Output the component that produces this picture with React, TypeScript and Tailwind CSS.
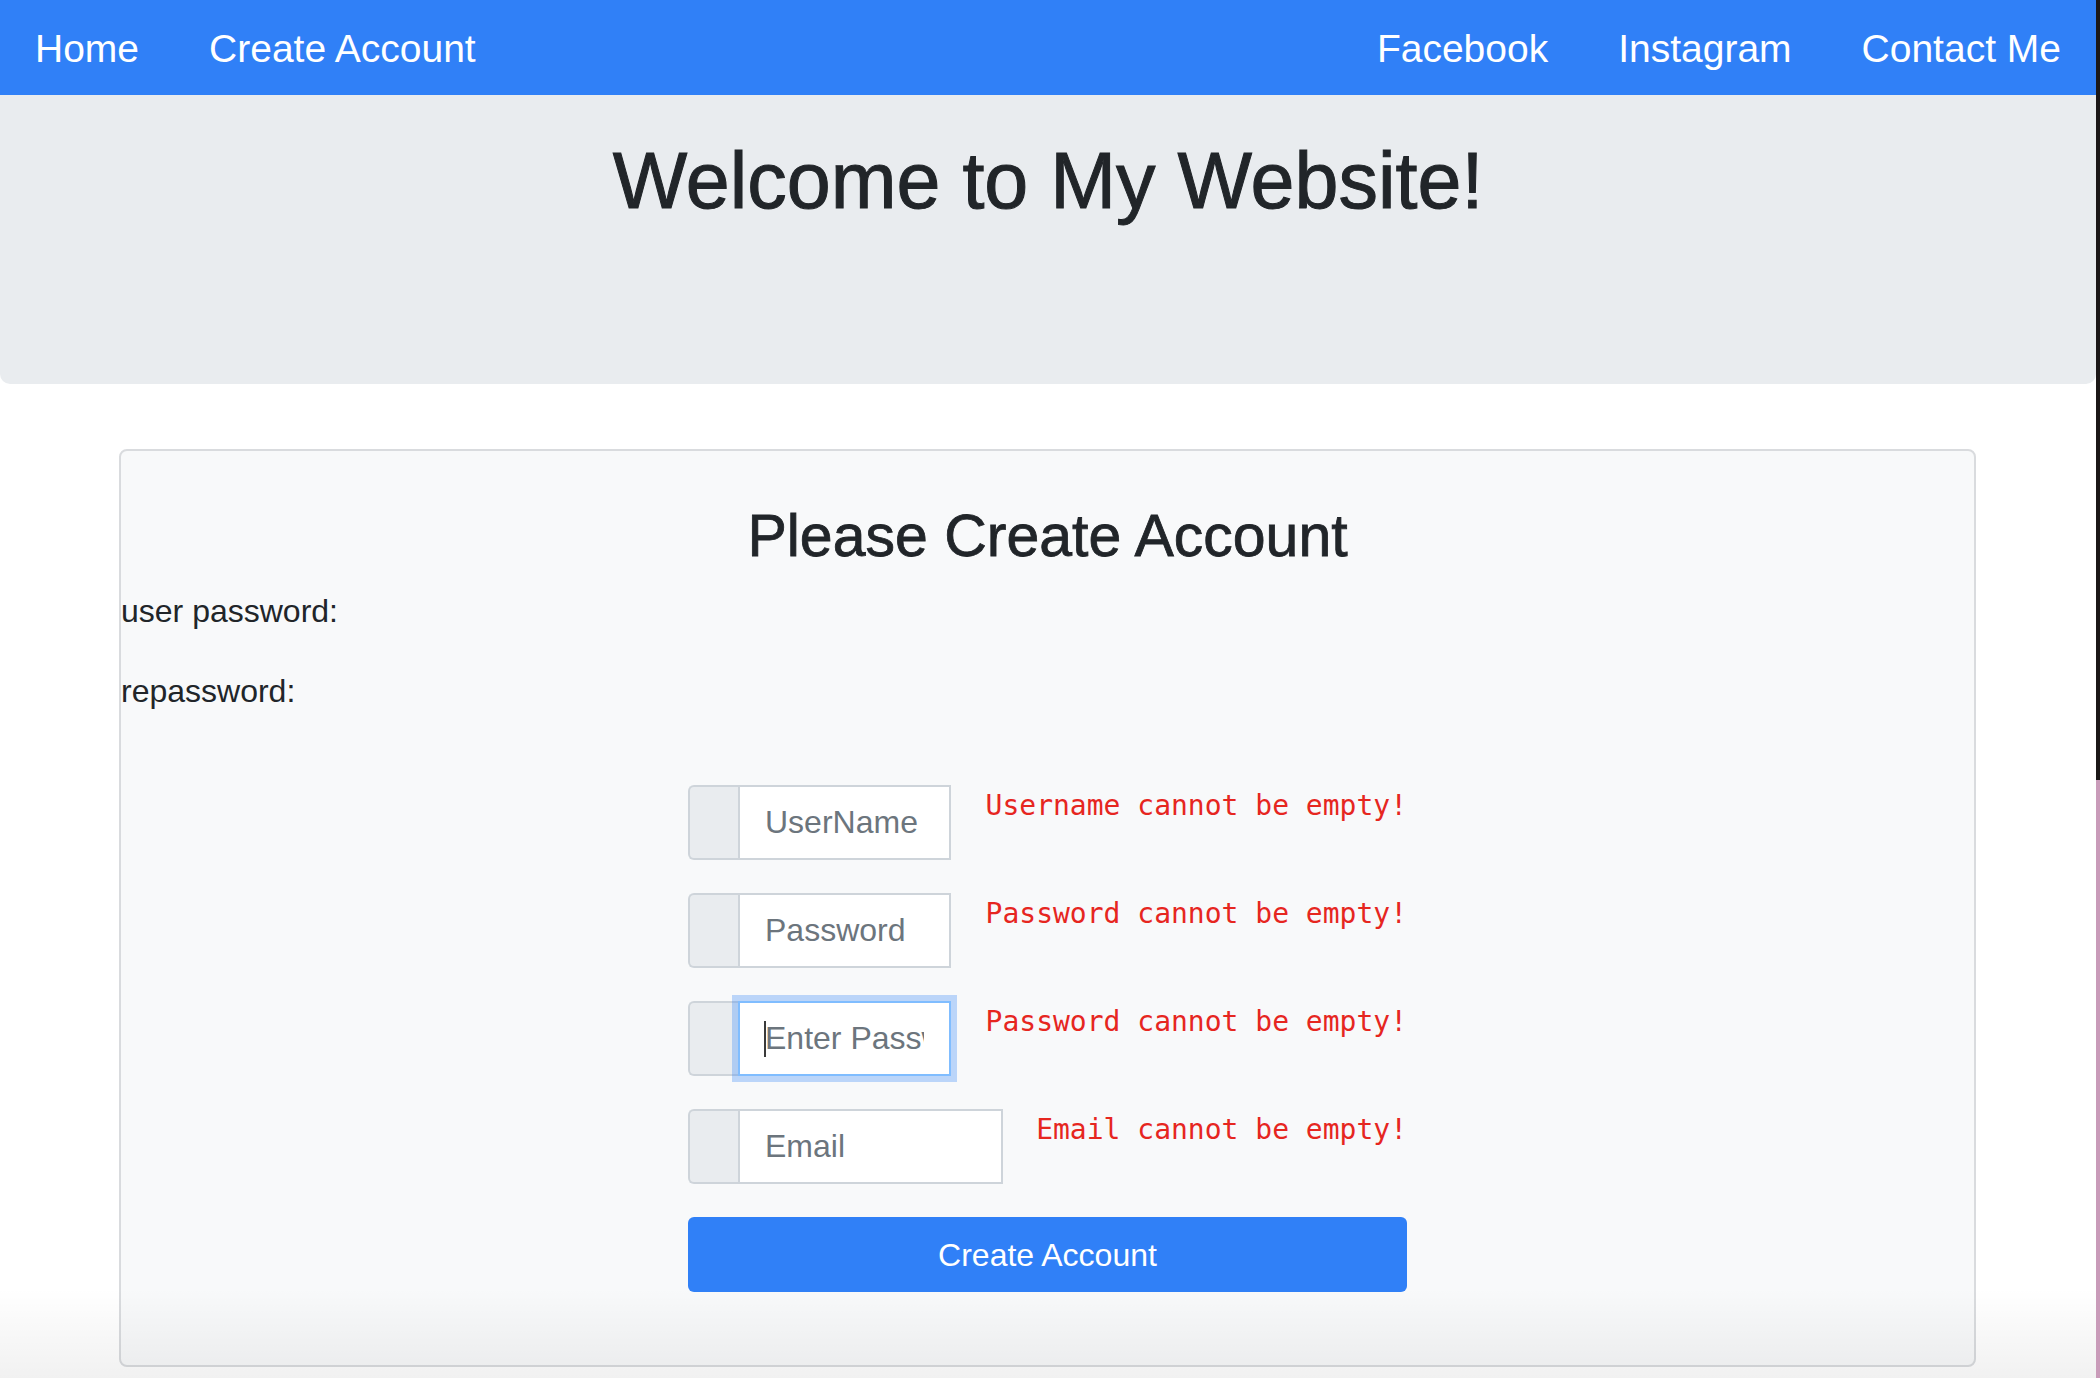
import React from "react";

const NAV_LEFT = ["Home", "Create Account"];
const NAV_RIGHT = ["Facebook", "Instagram", "Contact Me"];

type Field = { placeholder: string; error: string; width: string; focused?: boolean; type?: string };

const FIELDS: Field[] = [
  { placeholder: "UserName", error: "Username cannot be empty!", width: "w-[213px]" },
  { placeholder: "Password", error: "Password cannot be empty!", width: "w-[213px]", type: "password" },
  { placeholder: "Enter Password", error: "Password cannot be empty!", width: "w-[213px]", type: "password", focused: true },
  { placeholder: "Email", error: "Email cannot be empty!", width: "w-[265px]" },
];

function InputRow({ f }: { f: Field }) {
  return (
    <div className="flex items-start justify-between">
      <div className="flex h-[75px]">
        <div className="w-[50px] h-full bg-[#e9ecef] border-2 border-r-0 border-[#ced4da] rounded-l-[6px]" />
        <div className="relative h-full">
          <input
            type={f.type ?? "text"}
            placeholder={f.placeholder}
            className={`${f.width} h-full bg-white border-2 px-[25px] text-[32px] text-[#495057] placeholder:text-[#6c757d] outline-none ${
              f.focused ? "border-[#80bdff] shadow-[0_0_0_6px_rgba(48,128,247,0.3)]" : "border-[#ced4da]"
            }`}
          />
          {f.focused && <span className="absolute left-[26px] top-[20px] w-[2px] h-[36px] bg-[#3a3a3a]" />}
        </div>
      </div>
      <span className="font-['DejaVu_Sans_Mono',monospace] text-[28px] leading-[42px] text-[#e6261f] whitespace-pre">
        {f.error}
      </span>
    </div>
  );
}

export default function App() {
  return (
    <div className="relative flex w-[2100px] h-[1378px] overflow-hidden bg-white font-['Liberation_Sans',Arial,sans-serif] text-[#212529]">
      <div className="w-[2096px] flex flex-col">
        <nav className="h-[95px] bg-[#3080f7] flex items-center justify-between text-white text-[39px] pt-[4px]">
          <div className="flex">
            {NAV_LEFT.map(l => (
              <a key={l} className="px-[35px]">{l}</a>
            ))}
          </div>
          <div className="flex">
            {NAV_RIGHT.map(l => (
              <a key={l} className="px-[35px]">{l}</a>
            ))}
          </div>
        </nav>

        <div className="h-[289px] bg-[#e9ecef] rounded-b-[10px] pt-[46px] text-center">
          <h1 className="text-[79px] leading-none [-webkit-text-stroke:1px_#212529]">Welcome to My Website!</h1>
        </div>

        <div className="mt-[65px] ml-[119px] w-[1857px] h-[918px] bg-[#f8f9fa] border-2 border-[#d9dbde] rounded-[8px] pt-[56px]">
          <h2 className="text-center text-[59px] leading-none [-webkit-text-stroke:0.8px_#212529]">Please Create Account</h2>
          <p className="mt-[21px] text-[32px] leading-[48px]">user password:</p>
          <p className="mt-[32px] text-[32px] leading-[48px]">repassword:</p>

          <form className="mt-[70px] mx-auto w-[719px] flex flex-col gap-[33px]" onSubmit={e => e.preventDefault()}>
            {FIELDS.map((f, i) => (
              <InputRow key={i} f={f} />
            ))}
            <button type="submit" className="h-[75px] w-full bg-[#3080f7] text-white text-[32px] rounded-[6px]">
              Create Account
            </button>
          </form>
        </div>
      </div>

      <div className="w-[4px] flex flex-col">
        <div className="h-[780px] bg-[#1c1818]" />
        <div className="flex-1 bg-[#c99bb9]" />
      </div>

      <div className="pointer-events-none absolute left-0 bottom-0 w-[2096px] h-[90px] bg-linear-to-b from-transparent to-[rgba(0,0,0,0.055)]" />
    </div>
  );
}
